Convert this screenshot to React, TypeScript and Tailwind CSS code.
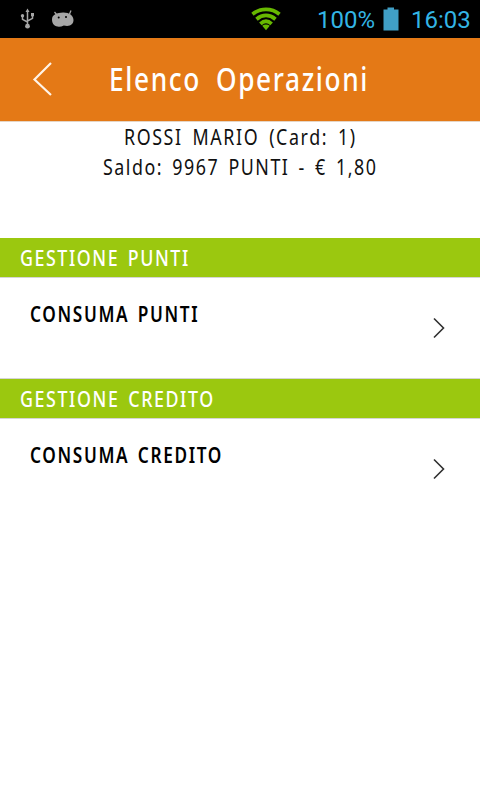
import type { ReactNode } from "react";

function StatusBar() {
  return (
    <div className="flex h-[38px] w-full items-center bg-black font-['Roboto',sans-serif] text-[24px] text-[#33b5e5]">
      <svg className="ml-[20px] shrink-0" width="16" height="22" viewBox="0 0 16 22" fill="none" stroke="#a6a6a6" strokeWidth="1.5">
        <path d="M7.5 3V18M2.5 8V11.3L7.5 14M12.5 7V10.3L7.5 13" />
        <path d="M7.5 0.5L9.5 4H5.5Z" fill="#a6a6a6" stroke="none" />
        <circle cx="2.5" cy="7.8" r="1.7" fill="#a6a6a6" stroke="none" />
        <path d="M11 5H14V8.3H11Z" fill="#a6a6a6" stroke="none" />
        <circle cx="7.5" cy="18.2" r="2.4" fill="#a6a6a6" stroke="none" />
      </svg>
      <svg className="ml-[15px] shrink-0" width="24" height="18" viewBox="0 0 24 18">
        <path d="M3.5 2L6 5M20 .5L18.5 4" stroke="#a6a6a6" strokeWidth="1.3" />
        <path d="M1 9.5C1 4.5 6 2.7 12 2.5C18 2.3 22.5 5.5 22.5 10C22.5 14.5 18.5 17 12.8 15.4C8 18 1 16.8 1 9.5Z" fill="#a6a6a6" />
        <circle cx="7.7" cy="7.6" r="1" />
        <circle cx="15" cy="7" r="1" />
      </svg>
      <svg className="ml-[176px] shrink-0" width="30" height="24" viewBox="0 0 30 24" fill="none" stroke="#67b800" strokeWidth="3.8">
        <path d="M1.5 7.2C9.5 .7 20.5 .7 28.5 7.2M5.5 12.2C11.5 7.2 18.5 7.2 24.5 12.2M9.4 16.8C13 13.5 17 13.5 20.6 16.8" />
        <path d="M15 23.2L11.2 18.8C13.5 16.9 16.5 16.9 18.8 18.8Z" fill="#67b800" stroke="none" />
      </svg>
      <span className="ml-[36px] w-[60px] whitespace-nowrap pt-[1px] leading-none">100%</span>
      <svg className="ml-[6px] shrink-0" width="16" height="24" viewBox="0 0 16 24">
        <path d="M4.5 .5H11V2.5H15.5V23.5H.5V2.5H4.5Z" fill="#409fc6" />
      </svg>
      <span className="ml-[12px] whitespace-nowrap pt-[1px] leading-none">16:03</span>
    </div>
  );
}

function Chevron() {
  return (
    <svg width="14" height="22" viewBox="0 0 14 22" fill="none" stroke="#303030" strokeWidth="1.6">
      <path d="M2 1.5L11.5 11L2 20.5" />
    </svg>
  );
}

function SectionHeader({ children }: { children: ReactNode }) {
  return (
    <h2 className="flex h-[39px] items-center bg-[#9bc80f] pl-[20px] pt-[2px] text-[21px] font-medium text-white">
      {children}
    </h2>
  );
}

function Row({ children }: { children: ReactNode }) {
  return (
    <div className="flex h-[100px] items-center justify-between pl-[30px] pr-[34px]">
      <div className="pb-[28px] text-[21px] font-semibold leading-[30px] text-black">{children}</div>
      <Chevron />
    </div>
  );
}

export default function App() {
  return (
    <div className="h-[800px] w-[480px] overflow-hidden bg-white font-['Noto_Sans',sans-serif]">
      <StatusBar />
      <header className="flex h-[84px] items-center border-b border-[#e5d5c5] bg-[#e47916]">
        <svg className="mb-px ml-[32px] shrink-0" width="22" height="36" viewBox="0 0 22 36" fill="none" stroke="#fff4e8" strokeWidth="2.2">
          <path d="M19 2L2.5 18.5L19 34" />
        </svg>
        <h1 className="mb-px ml-[55px] origin-left scale-x-[0.82] whitespace-nowrap text-[32px] font-medium leading-[40px] tracking-[2px] text-white [word-spacing:8px]">
          Elenco Operazioni
        </h1>
      </header>
      <section className="flex h-[116px] flex-col text-[21px] leading-[30px] text-[#111]">
        <p className="ml-[124px] origin-left scale-x-[0.85] whitespace-nowrap tracking-[1.85px] [word-spacing:4.5px]">ROSSI MARIO (Card: 1)</p>
        <p className="ml-[103px] origin-left scale-x-[0.85] whitespace-nowrap tracking-[1.8px] [word-spacing:3.5px]">Saldo: 9967 PUNTI - € 1,80</p>
      </section>
      <SectionHeader>
        <span className="origin-left scale-x-[0.85] whitespace-nowrap tracking-[1.8px] [word-spacing:3px]">GESTIONE PUNTI</span>
      </SectionHeader>
      <div className="border-y border-[#d5d5d5]">
        <Row>
          <div className="origin-left scale-x-[0.82] whitespace-nowrap tracking-[2px] [word-spacing:3px]">CONSUMA PUNTI</div>
        </Row>
      </div>
      <SectionHeader>
        <span className="origin-left scale-x-[0.85] whitespace-nowrap tracking-[1.85px] [word-spacing:3px]">GESTIONE CREDITO</span>
      </SectionHeader>
      <div className="border-t border-[#d5d5d5]">
        <Row>
          <div className="origin-left scale-x-[0.82] whitespace-nowrap tracking-[2px] [word-spacing:3px]">CONSUMA CREDITO</div>
        </Row>
      </div>
    </div>
  );
}
